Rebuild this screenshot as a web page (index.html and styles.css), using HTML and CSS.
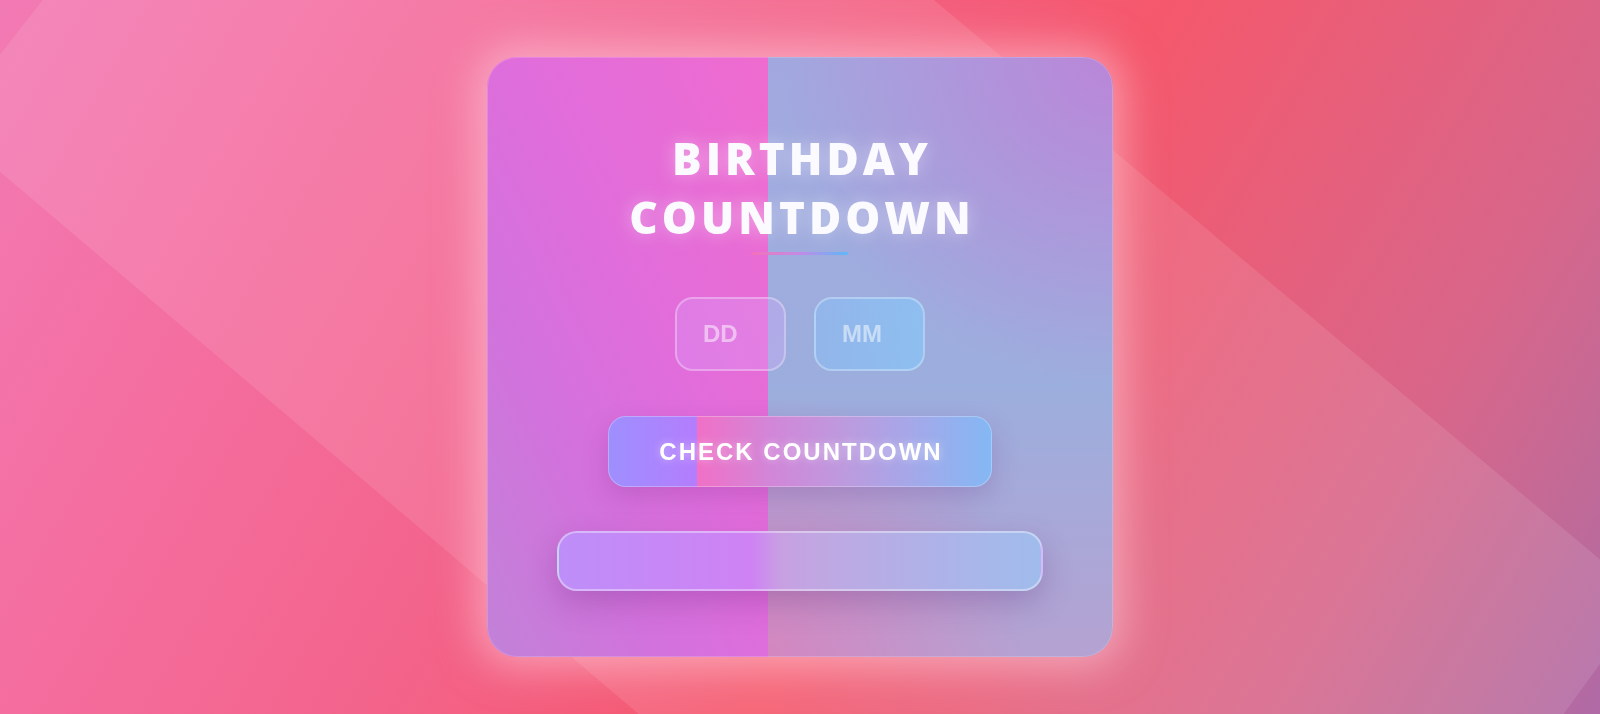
FILE: index.html
```html
<!DOCTYPE html>
<html lang="en">
<head>
<meta charset="utf-8">
<title>Birthday Countdown</title>
<link rel="stylesheet" href="styles.css">
</head>
<body>
  <div class="backdrop-band"></div>
  <main class="card">
    <h1 class="title">BIRTHDAY<br>COUNTDOWN</h1>
    <div class="title-bar"></div>
    <div class="date-row">
      <input class="field field-day" type="text" placeholder="DD">
      <input class="field field-month" type="text" placeholder="MM">
    </div>
    <button class="check-btn" type="button">CHECK COUNTDOWN</button>
    <div class="result"></div>
  </main>
</body>
</html>
```
FILE: styles.css
```css
* { box-sizing: border-box; }

html, body { height: 100%; }

body {
  margin: 0;
  min-height: 100vh;
  display: flex;
  align-items: center;
  justify-content: center;
  overflow: hidden;
  font-family: "Liberation Sans", Arial, sans-serif;
  background: linear-gradient(120deg,
    #f27ab4 0%,
    #f46ea0 19%,
    #f3648c 38%,
    #f5586c 58%,
    #d8668a 83%,
    #c06a98 93%,
    #b06aa6 100%);
}

.backdrop-band {
  position: fixed;
  inset: 0;
  background: rgba(255, 255, 255, 0.1);
  clip-path: polygon(-55px 125px, 396px -452px, 1647px 599px, 1211px 1200px);
  pointer-events: none;
}

.card {
  position: relative;
  width: 626px;
  height: 600px;
  padding-top: 71px;
  display: flex;
  flex-direction: column;
  align-items: center;
  border-radius: 30px;
  border: 1px solid rgba(255, 255, 255, 0.18);
  box-shadow: 0 0 40px 10px rgba(255, 215, 228, 0.52);
  background-origin: border-box;
  background-repeat: no-repeat;
  background-image:
    linear-gradient(to bottom left, #ef6bcf 0%, #e06ddc 45%, #d272dc 70%, #c182d8 100%),
    radial-gradient(circle at 100% 0%, rgba(186, 134, 216, 1) 0, rgba(186, 134, 216, 0) 330px),
    radial-gradient(circle at 0% 100%, rgba(212, 134, 192, 1) 0, rgba(212, 134, 192, 0) 260px),
    linear-gradient(180deg, #a2a8df 0%, #9caedd 55%, #b4a2d2 100%);
  background-size: 281px 100%, 345px 100%, 345px 100%, 345px 100%;
  background-position: 0 0, 100% 0, 100% 0, 100% 0;
}

.title {
  margin: 0;
  padding-left: 4px;
  font-family: "Open Sans", "Noto Sans", sans-serif;
  font-weight: 800;
  font-size: 44px;
  line-height: 59px;
  letter-spacing: 4px;
  text-align: center;
  color: #fbfaff;
  text-shadow: 0 0 18px rgba(255, 255, 255, 0.4);
}

.title-bar {
  width: 96px;
  height: 3px;
  margin-top: 5px;
  border-radius: 2px;
  background: linear-gradient(90deg, rgba(244, 114, 182, 0.9), #c48ae6 50%, #5cb8fa);
}

.date-row {
  display: flex;
  gap: 28px;
  margin-top: 42px;
}

.field {
  width: 111px;
  height: 74px;
  padding: 0 0 0 26px;
  border-radius: 18px;
  border: 2px solid rgba(255, 255, 255, 0.3);
  font-family: "Liberation Sans", Arial, sans-serif;
  font-weight: 700;
  font-size: 24px;
  color: #ffffff;
  outline: none;
}

.field::placeholder { color: rgba(255, 255, 255, 0.5); }

.field-day {
  background: linear-gradient(90deg, rgba(215, 160, 255, 0.3), rgba(220, 170, 255, 0.3));
}

.field-month {
  background: linear-gradient(90deg, rgba(130, 195, 255, 0.38), rgba(130, 205, 255, 0.55));
}

.check-btn {
  width: 384px;
  height: 71px;
  margin-top: 45px;
  padding: 0 0 0 2px;
  border-radius: 18px;
  border: 1px solid rgba(255, 255, 255, 0.28);
  font-family: "Liberation Sans", Arial, sans-serif;
  font-weight: 700;
  font-size: 24px;
  letter-spacing: 2px;
  color: #ffffff;
  text-shadow: 0 0 8px rgba(255, 255, 255, 0.45);
  box-shadow: 0 10px 26px rgba(110, 40, 130, 0.22);
  background-repeat: no-repeat;
  background-origin: border-box;
  background-image:
    linear-gradient(90deg, #9e8ffe, #b47dfd),
    linear-gradient(90deg, #f070c6 0%, #d286d8 25%, #bd9ade 50%, #a2a9ea 75%, #84b8f4 100%);
  background-size: 89px 100%, 295px 100%;
  background-position: 0 0, 89px 0;
  cursor: pointer;
}

.result {
  width: 486px;
  height: 60px;
  margin-top: 44px;
  border-radius: 20px;
  border: 2px solid rgba(255, 255, 255, 0.38);
  background: linear-gradient(90deg,
    #be8ef8 0%,
    #cf82f4 40%,
    #c8a0e2 46%,
    #bfa8e2 55%,
    #aeb2e8 78%,
    #a0bcec 100%);
  box-shadow: 0 12px 30px rgba(90, 30, 110, 0.25);
}
```
